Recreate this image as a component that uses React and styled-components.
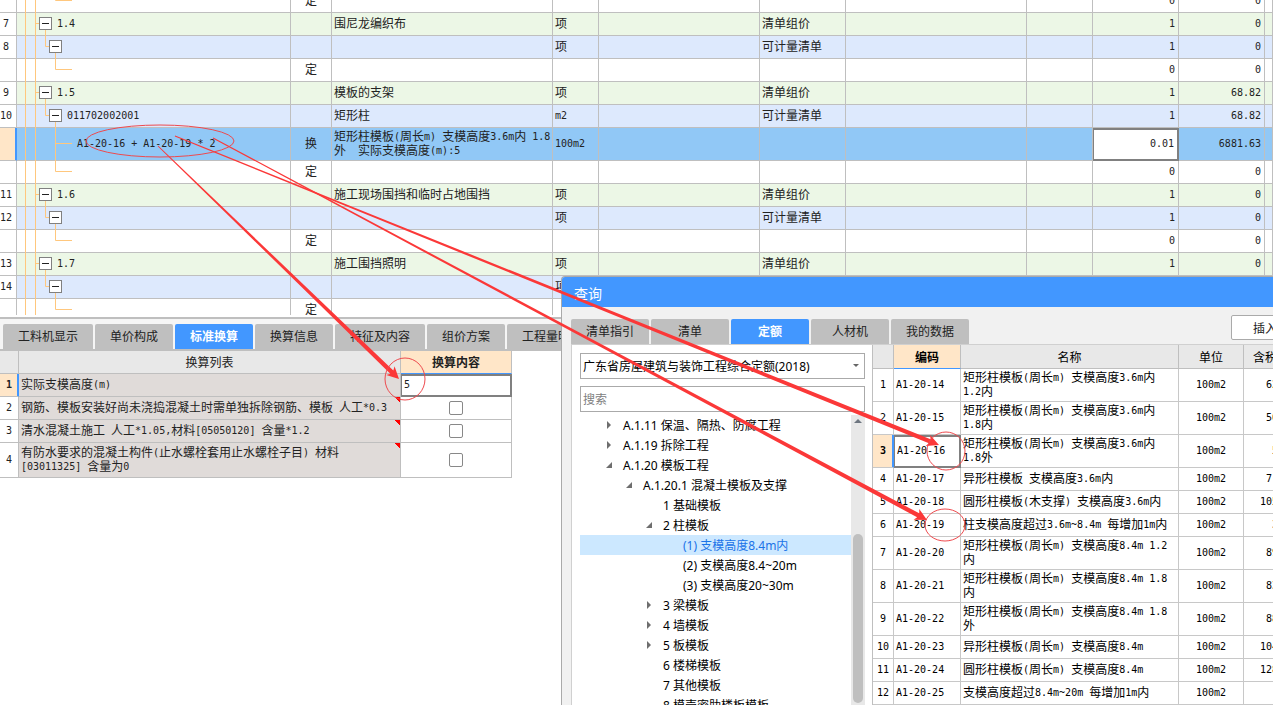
import React from 'react'
import styled, { createGlobalStyle, css } from 'styled-components'

const GlobalStyle = createGlobalStyle`
    *{
        box-sizing: border-box;
    }
    body{
        margin: 0;
        overflow: hidden;
        font-family: 'Noto Sans', 'Noto Sans CJK SC', sans-serif;
        font-size: 12px;
        color: #222;
        background: #fff;
    }
    button, input, select{
        font-family: inherit;
        font-size: inherit;
        color: inherit;
        border-radius: 0;
    }
`

const Page = styled.div`
    position: relative;
    height: 100vh;
    overflow: hidden;
    display: flex;
    flex-direction: column;
`

/* tables */
const Table = styled.table`
    table-layout: fixed;
    border-collapse: separate;
    border-spacing: 0;
    font-family: 'Noto Sans CJK SC', sans-serif;
    line-height: 14px;
`
const Latin = styled.span`
    font-family: 'DejaVu Sans Mono', monospace;
    font-size: 10px;
    line-height: 10px;
    vertical-align: 1px;
`
const Cell = styled.td`
    height: ${(props) => props.$height || 23}px;
    padding: 0 2px 2px;
    border-right: 1px solid ${(props) => props.$line || '#bfbfbf'};
    border-bottom: 1px solid ${(props) => props.$line || '#bfbfbf'};
    text-align: ${(props) => props.$align || 'left'};
    white-space: pre;
    overflow: hidden;
`
const EditCell = styled(Cell)`
    padding: 0;
    border-color: #808080;
`
const HeadCell = styled.th`
    height: ${(props) => props.$height || 23}px;
    padding: 0;
    font-weight: ${(props) => (props.$active ? 'bold' : 'normal')};
    background: ${(props) => (props.$active ? '#ffe6c8' : '#e8e8e8')};
    border-right: 1px solid #bfbfbf;
    border-bottom: 1px solid ${(props) => (props.$active ? '#4297ff' : '#bfbfbf')};
    text-align: center;
`
const PriceHead = styled(HeadCell)`
    padding-left: 9px;
    text-align: left;
`
const NumCell = styled(Cell)`
    text-align: center;
    font-weight: ${(props) => (props.$active ? 'bold' : 'normal')};
    background: ${(props) => (props.$active ? '#ffe6c8' : '#fff')};
    ${(props) => props.$active && css`
        box-shadow: inset -1px 0 #4297ff;
        border-right-color: #4297ff;
    `}
`
const CellInput = styled.input`
    display: block;
    width: 100%;
    height: ${(props) => (props.$tall ? '32px' : '22px')};
    padding: 0 3px 2px 2px;
    border: 1px solid #808080;
    border-top-width: 2px;
    outline: none;
    background: #fff;
    font-family: 'DejaVu Sans Mono', monospace;
    font-size: 10px;
    text-align: ${(props) => props.$align || 'left'};
`

/* bill grid */
const GridPane = styled.section`
    flex: none;
    height: 315px;
    overflow: hidden;
`
const GridTable = styled(Table)`
    width: 100%;
    margin-top: -10px;
`
const rowColors = { group: '#ecf7e6', item: '#dde9fd', leaf: '#fff', active: '#91c8f6' }
const GridRow = styled.tr`
    background: ${(props) => rowColors[props.$kind]};
`
const GridNum = styled(NumCell)`
    padding: 0 4px 2px 0;
`
const NumberCell = styled(Cell)`
    padding-right: 3px;
    text-align: right;
`
const TreeCell = styled(Cell)`
    position: relative;
    overflow: visible;
`
const TreeLines = styled.svg`
    position: absolute;
    left: 0;
    top: 0;
    overflow: visible;
    stroke: #ffc77d;
    fill: none;
`
const TreeNode = styled.div`
    position: relative;
    display: flex;
    align-items: center;
    gap: 5px;
    padding-left: ${(props) => props.$indent}px;
`
const Toggle = styled.button`
    flex: none;
    width: 13px;
    height: 13px;
    padding: 0;
    border: 1px solid #808080;
    background: linear-gradient(#222, #222) center / 7px 1px no-repeat #fff;
`
const Splitter = styled.div`
    flex: none;
    height: 4px;
    border-top: 2px solid #fff;
    border-bottom: 2px solid #bfbfbf;
`

/* tabs */
const Tabs = styled.div`
    display: flex;
    align-items: flex-end;
    gap: 2px;
    flex: none;
    overflow: hidden;
`
const Tab = styled.button`
    flex: none;
    min-width: 78px;
    height: 25px;
    padding: 0 15px 2px;
    border: none;
    border-radius: 2px 2px 0 0;
    background: ${(props) => (props.$active ? '#4297ff' : '#bfbfbf')};
    color: ${(props) => (props.$active ? '#fff' : '#222')};
    font-weight: ${(props) => (props.$active ? 'bold' : 'normal')};
`
const DetailTabs = styled(Tabs)`
    height: 32px;
    padding-left: 3px;
    background: #f5f5f5;
    border-bottom: 2px solid #bfbfbf;
`

/* conversion list */
const ConvertTable = styled(Table)`
    width: 512px;
`
const NoteCell = styled(Cell)`
    background: ${(props) => props.$note && 'linear-gradient(to top right, transparent 50%, #f00 50%) right top / 6px 5px no-repeat'} #e0dbd9;
`
const Check = styled.input`
    appearance: none;
    display: block;
    width: 14px;
    height: 14px;
    margin: 0 auto;
    border: 1px solid #888;
    border-radius: 2px;
    background: #fff;
`
const CheckCell = styled(Cell)`
    padding: 0;
`

/* query window */
const Window = styled.section`
    position: absolute;
    left: 561px;
    right: 0;
    top: 276px;
    bottom: 0;
    display: flex;
    flex-direction: column;
    overflow: hidden;
    border-left: 1px solid #aaa;
    border-top: 1px solid #aaa;
    border-radius: 4px 0 0 0;
    background: #f1f1f1;
`
const TitleBar = styled.h1`
    flex: none;
    height: 30px;
    margin: 0;
    padding: 2px 0 0 12px;
    background: #4297ff;
    color: #fff;
    font-size: 14px;
    font-weight: normal;
    line-height: 30px;
`
const QueryTabs = styled(Tabs)`
    height: 37px;
    padding-left: 9px;
`
const InsertButton = styled.button`
    flex: none;
    width: 68px;
    height: 25px;
    margin: 0 -26px 4px auto;
    padding: 0;
    border: 1px solid #aaa;
    border-radius: 2px;
    background: #fff;
`
const QueryBody = styled.div`
    flex: 1;
    min-height: 0;
    display: flex;
    margin-left: 9px;
    border-top: 1px solid #d0d0d0;
    border-left: 1px solid #d0d0d0;
    background: #fff;
`
const Side = styled.div`
    flex: none;
    width: 300px;
    padding: 8px 7px 0 8px;
    display: flex;
    flex-direction: column;
    gap: 7px;
    color: #000;
`
const SelectWrap = styled.div`
    flex: none;
    display: flex;
    align-items: center;
    height: 26px;
    padding-right: 5px;
    border: 1px solid #aaa;
`
const Select = styled.select`
    appearance: none;
    flex: 1;
    height: 24px;
    padding: 0 2px;
    border: none;
    background: #fff;
`
const Search = styled.input`
    flex: none;
    height: 26px;
    padding: 0 2px;
    border: 1px solid #aaa;

    &::placeholder{
        color: #808080;
    }
`
const TreeBox = styled.div`
    flex: 1;
    min-height: 0;
    display: flex;
    margin-top: -4px;
`
const Tree = styled.ul`
    flex: 1;
    margin: 0;
    padding: 0;
    list-style: none;
    overflow: hidden;
`
const TreeItem = styled.li`
    display: flex;
    align-items: center;
    gap: 11px;
    height: 20px;
    padding-left: ${(props) => 24 + props.$level * 20}px;
    white-space: pre;
    background: ${(props) => (props.$active ? '#cce8ff' : '#fff')};
    color: ${(props) => (props.$active ? '#1a73e8' : '#000')};
`
const Scrollbar = styled.div`
    flex: none;
    width: 14px;
    padding: 4px 2px 2px;
    display: flex;
    flex-direction: column;
    justify-content: space-between;
    background: #e8e8e8;
`
const Thumb = styled.div`
    height: 169px;
    border-radius: 5px;
    background: #bfbfbf;
`
const Results = styled.div`
    flex: 1;
    min-width: 0;
    overflow: hidden;
    border-left: 1px solid #bfbfbf;
`
const ResultTable = styled(Table)`
    width: 440px;
    color: #000;
`
const PriceCell = styled(Cell)`
    padding-right: 34px;
    text-align: right;
`

const Marks = styled.svg`
    position: absolute;
    left: 0;
    top: 0;
    overflow: visible;
    pointer-events: none;
    fill: #fb3838;
`

/* half width characters take 6px, full width ones 12px */
const Mixed = ({ text }) => (
    <>
        {String(text).split(/([\x20-\x7e]+)/).map((part, index) => (
            index % 2 ? <Latin key={index}>{part}</Latin> : part
        ))}
    </>
)

const billRows = [
    { kind: 'leaf', type: '定', qty: '0', total: '0' },
    { no: 7, kind: 'group', code: '1.4', name: '围尼龙编织布', unit: '项', mode: '清单组价', qty: '1', total: '0' },
    { no: 8, kind: 'item', unit: '项', mode: '可计量清单', qty: '1', total: '0' },
    { kind: 'leaf', type: '定', qty: '0', total: '0' },
    { no: 9, kind: 'group', code: '1.5', name: '模板的支架', unit: '项', mode: '清单组价', qty: '1', total: '68.82' },
    { no: 10, kind: 'item', code: '011702002001', name: '矩形柱', unit: 'm2', mode: '可计量清单', qty: '1', total: '68.82' },
    { kind: 'active', code: 'A1-20-16 + A1-20-19 * 2', type: '换', name: '矩形柱模板(周长m) 支模高度3.6m内 1.8\n外  实际支模高度(m):5', unit: '100m2', qty: '0.01', total: '6881.63' },
    { kind: 'leaf', type: '定', qty: '0', total: '0' },
    { no: 11, kind: 'group', code: '1.6', name: '施工现场围挡和临时占地围挡', unit: '项', mode: '清单组价', qty: '1', total: '0' },
    { no: 12, kind: 'item', unit: '项', mode: '可计量清单', qty: '1', total: '0' },
    { kind: 'leaf', type: '定', qty: '0', total: '0' },
    { no: 13, kind: 'group', code: '1.7', name: '施工围挡照明', unit: '项', mode: '清单组价', qty: '1', total: '0' },
    { no: 14, kind: 'item', unit: '项', mode: '可计量清单', qty: '1', total: '0' },
    { kind: 'leaf', type: '定', qty: '0', total: '0' },
]

const branchPaths = {
    group: 'M18.5 10.5H22M28.5 17V23',
    item: 'M28.5 0V10.5H32M38.5 17V23',
    leaf: 'M38.5 0V10.5H55',
    active: 'M38.5 0V33M38.5 15.5H55',
}
const indents = { group: 20, item: 30, leaf: 58, active: 58 }

const BillGrid = () => (
    <GridPane>
        <GridTable>
            <colgroup>
                {[17, 274, 41, 221, 46, 161, 86, 181, 66, 86, 86].map((width, index) => <col key={index} width={width} />)}
                <col />
            </colgroup>
            <tbody>
                {billRows.map((row, index) => {
                    const tall = row.kind === 'active'
                    const height = tall ? 33 : 23
                    return (
                        <GridRow $kind={row.kind} key={index}>
                            <GridNum $height={height} $active={tall}><Mixed text={row.no || ''} /></GridNum>
                            <TreeCell>
                                <TreeLines width="60" height={height}>
                                    <path d={`M8.5 0V${height}M18.5 0V${height}${branchPaths[row.kind]}`} />
                                </TreeLines>
                                <TreeNode $indent={indents[row.kind]}>
                                    {(row.kind === 'group' || row.kind === 'item') && <Toggle aria-label="折叠" />}
                                    {row.code && <span><Latin>{row.code}</Latin></span>}
                                </TreeNode>
                            </TreeCell>
                            <Cell $align="center">{row.type}</Cell>
                            <Cell><Mixed text={row.name || ''} /></Cell>
                            <Cell><Mixed text={row.unit || ''} /></Cell>
                            <Cell />
                            <Cell>{row.mode}</Cell>
                            <Cell />
                            <Cell />
                            {tall
                                ? <EditCell><CellInput $tall $align="right" aria-label="工程量" defaultValue={row.qty} /></EditCell>
                                : <NumberCell><Latin>{row.qty}</Latin></NumberCell>}
                            <NumberCell><Latin>{row.total}</Latin></NumberCell>
                            <Cell />
                        </GridRow>
                    )
                })}
            </tbody>
        </GridTable>
    </GridPane>
)

const detailTabs = ['工料机显示', '单价构成', '标准换算', '换算信息', '特征及内容', '组价方案', '工程量明细']

const convertRows = [
    '实际支模高度(m)',
    '钢筋、模板安装好尚未浇捣混凝土时需单独拆除钢筋、模板 人工*0.3',
    '清水混凝土施工 人工*1.05,材料[05050120] 含量*1.2',
    '有防水要求的混凝土构件(止水螺栓套用止水螺栓子目) 材料\n[03011325] 含量为0',
]

const ConvertList = () => (
    <ConvertTable>
        <colgroup>
            <col width="19" />
            <col width="382" />
            <col width="111" />
        </colgroup>
        <thead>
            <tr>
                <HeadCell />
                <HeadCell>换算列表</HeadCell>
                <HeadCell $active>换算内容</HeadCell>
            </tr>
        </thead>
        <tbody>
            {convertRows.map((text, index) => (
                <tr key={index}>
                    <NumCell $active={index === 0}><Mixed text={index + 1} /></NumCell>
                    <NoteCell $note={index > 0} $height={index === 3 ? 35 : 23}><Mixed text={text} /></NoteCell>
                    {index === 0
                        ? <EditCell><CellInput aria-label={text} defaultValue="5" /></EditCell>
                        : <CheckCell><Check type="checkbox" aria-label={text} /></CheckCell>}
                </tr>
            ))}
        </tbody>
    </ConvertTable>
)

const treeItems = [
    { level: 0, state: 'closed', text: 'A.1.11 保温、隔热、防腐工程' },
    { level: 0, state: 'closed', text: 'A.1.19 拆除工程' },
    { level: 0, state: 'open', text: 'A.1.20 模板工程' },
    { level: 1, state: 'open', text: 'A.1.20.1 混凝土模板及支撑' },
    { level: 2, text: '1 基础模板' },
    { level: 2, state: 'open', text: '2 柱模板' },
    { level: 3, text: '(1) 支模高度8.4m内', active: true },
    { level: 3, text: '(2) 支模高度8.4~20m' },
    { level: 3, text: '(3) 支模高度20~30m' },
    { level: 2, state: 'closed', text: '3 梁模板' },
    { level: 2, state: 'closed', text: '4 墙模板' },
    { level: 2, state: 'closed', text: '5 板模板' },
    { level: 2, text: '6 楼梯模板' },
    { level: 2, text: '7 其他模板' },
    { level: 2, text: '8 模壳密肋楼板模板' },
]
const arrowPaths = { closed: 'M3 0V8L7 4Z', open: 'M8 1V7H2Z' }

const resultRows = [
    ['A1-20-14', '矩形柱模板(周长m) 支模高度3.6m内\n1.2内', '62'],
    ['A1-20-15', '矩形柱模板(周长m) 支模高度3.6m内\n1.8内', '50'],
    ['A1-20-16', '矩形柱模板(周长m) 支模高度3.6m内\n1.8外', '5'],
    ['A1-20-17', '异形柱模板 支模高度3.6m内', '7.'],
    ['A1-20-18', '圆形柱模板(木支撑) 支模高度3.6m内', '105'],
    ['A1-20-19', '柱支模高度超过3.6m~8.4m 每增加1m内', '3'],
    ['A1-20-20', '矩形柱模板(周长m) 支模高度8.4m 1.2\n内', '89'],
    ['A1-20-21', '矩形柱模板(周长m) 支模高度8.4m 1.8\n内', '83'],
    ['A1-20-22', '矩形柱模板(周长m) 支模高度8.4m 1.8\n外', '88'],
    ['A1-20-23', '异形柱模板(周长m) 支模高度8.4m', '104'],
    ['A1-20-24', '圆形柱模板(周长m) 支模高度8.4m', '128'],
    ['A1-20-25', '支模高度超过8.4m~20m 每增加1m内', ''],
]

const QueryResults = () => (
    <Results>
        <ResultTable>
            <colgroup>
                {[21, 67, 218, 65, 69].map((width) => <col key={width} width={width} />)}
            </colgroup>
            <thead>
                <tr>
                    <HeadCell $height={24} />
                    <HeadCell $active>编码</HeadCell>
                    <HeadCell>名称</HeadCell>
                    <HeadCell>单位</HeadCell>
                    <PriceHead>含税</PriceHead>
                </tr>
            </thead>
            <tbody>
                {resultRows.map(([code, name, price], index) => {
                    const height = name.includes('\n') ? 33 : 23
                    const active = index === 2
                    return (
                        <tr key={code}>
                            <NumCell $height={height} $active={active} $line="#c8c8c8"><Mixed text={index + 1} /></NumCell>
                            {active
                                ? <EditCell><CellInput $tall aria-label="编码" defaultValue={code} /></EditCell>
                                : <Cell $line="#c8c8c8"><Latin>{code}</Latin></Cell>}
                            <Cell $line="#c8c8c8"><Mixed text={name} /></Cell>
                            <Cell $line="#c8c8c8" $align="center"><Latin>100m2</Latin></Cell>
                            <PriceCell $line="#c8c8c8"><Latin>{price}</Latin></PriceCell>
                        </tr>
                    )
                })}
            </tbody>
        </ResultTable>
    </Results>
)

const QueryWindow = () => (
    <Window>
        <TitleBar>查询</TitleBar>
        <QueryTabs>
            {['清单指引', '清单', '定额', '人材机', '我的数据'].map((name) => (
                <Tab key={name} $active={name === '定额'}>{name}</Tab>
            ))}
            <InsertButton>插入</InsertButton>
        </QueryTabs>
        <QueryBody>
            <Side>
                <SelectWrap>
                    <Select aria-label="定额库">
                        <option>广东省房屋建筑与装饰工程综合定额(2018)</option>
                    </Select>
                    <svg width="6" height="4"><path d="M0 0H6L3 3Z" fill="#666" /></svg>
                </SelectWrap>
                <Search aria-label="搜索" placeholder="搜索" />
                <TreeBox>
                    <Tree>
                        {treeItems.map((item) => (
                            <TreeItem key={item.text} $level={item.level} $active={item.active}>
                                <svg width="8" height="8">
                                    {item.state && <path d={arrowPaths[item.state]} fill="#6e6e6e" />}
                                </svg>
                                {item.text}
                            </TreeItem>
                        ))}
                    </Tree>
                    <Scrollbar>
                        <svg width="10" height="5"><path d="M1 4H9L5 0Z" fill="#6e7680" /></svg>
                        <Thumb />
                    </Scrollbar>
                </TreeBox>
            </Side>
            <QueryResults />
        </QueryBody>
    </Window>
)

const arrows = [
    [158, 146, 399, 379],
    [175, 136, 939, 445],
    [213, 138, 927, 520],
]
const ellipses = [
    [160, 141, 74, 16],
    [405, 379, 20, 21],
    [946, 451, 19, 19],
    [945, 525, 20, 16],
]

const taperedArrow = ([x1, y1, x2, y2]) => {
    const length = Math.hypot(x2 - x1, y2 - y1)
    const ux = (x2 - x1) / length
    const uy = (y2 - y1) / length
    const at = (along, side) => `${x1 + ux * along - uy * side},${y1 + uy * along + ux * side}`
    return [
        at(0, 0.5), at(length - 10, 2.2), at(length - 12, 6), at(length, 0),
        at(length - 12, -6), at(length - 10, -2.2), at(0, -0.5),
    ].join(' ')
}

const Annotations = () => (
    <Marks width="1273" height="705" aria-hidden="true">
        {arrows.map((arrow) => <polygon key={arrow[0]} points={taperedArrow(arrow)} />)}
        {ellipses.map(([cx, cy, rx, ry]) => (
            <ellipse key={cx} cx={cx} cy={cy} rx={rx} ry={ry} fill="none" stroke="#ee4a4e" />
        ))}
    </Marks>
)

const App = () => {
    return (
        <Page>
            <GlobalStyle />
            <BillGrid />
            <Splitter />
            <DetailTabs>
                {detailTabs.map((name) => (
                    <Tab key={name} $active={name === '标准换算'}>{name}</Tab>
                ))}
            </DetailTabs>
            <ConvertList />
            <QueryWindow />
            <Annotations />
        </Page>
    )
}

export default App
